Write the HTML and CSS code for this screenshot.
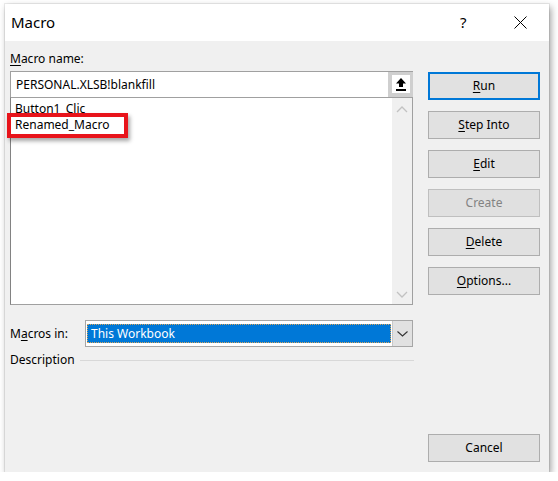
FILE: index.html
```html
<!DOCTYPE html>
<html>
<head>
<meta charset="utf-8">
<link rel="stylesheet" href="styles.css">
</head>
<body>
<div class="dialog">
  <div class="titlebar">
    <span class="title">Macro</span>
    <span class="tb-help">?</span>
    <span class="tb-close"><svg width="13" height="13" viewBox="0 0 13 13"><path d="M0.5 0.5 L12.5 12.5 M12.5 0.5 L0.5 12.5" stroke="#000" stroke-width="1" fill="none"/></svg></span>
  </div>
  <div class="body">
    <div class="left">
      <div class="lbl name-lbl"><u>M</u>acro name:</div>
      <div class="namebox">
        <span class="nametext">PERSONAL.XLSB!blankfill</span>
        <span class="upbtn"><span class="upicon"><svg width="12" height="14" viewBox="0 0 12 14"><path d="M6 1 L11 6.5 L8 6.5 L8 10 L4 10 L4 6.5 L1 6.5 Z" fill="#000"/><rect x="1" y="12" width="10" height="2" fill="#000"/></svg></span></span>
      </div>
      <div class="listbox">
        <div class="items">
          <div class="item">Button1_Clic</div>
          <div class="item marked">Renamed_Macro<span class="redbox"></span></div>
        </div>
        <div class="scroll">
          <svg width="12" height="7" viewBox="0 0 12 7"><path d="M1 6 L6 1 L11 6" stroke="#c2c2c2" stroke-width="1.3" fill="none"/></svg>
          <svg width="12" height="7" viewBox="0 0 12 7"><path d="M1 1 L6 6 L11 1" stroke="#c2c2c2" stroke-width="1.3" fill="none"/></svg>
        </div>
      </div>
      <div class="inrow">
        <div class="lbl">M<u>a</u>cros in:</div>
        <div class="combo">
          <div class="selwrap"><div class="sel">This Workbook</div></div>
          <div class="ddbtn"><svg width="11" height="6" viewBox="0 0 11 6"><path d="M0.5 0.5 L5.5 5 L10.5 0.5" stroke="#333" stroke-width="1.1" fill="none"/></svg></div>
        </div>
      </div>
      <div class="desc"><span class="lbl">Description</span><span class="rule"></span></div>
    </div>
    <div class="right">
      <div class="btn default"><u>R</u>un</div>
      <div class="btn"><u>S</u>tep Into</div>
      <div class="btn"><u>E</u>dit</div>
      <div class="btn disabled">Create</div>
      <div class="btn"><u>D</u>elete</div>
      <div class="btn"><u>O</u>ptions...</div>
      <div class="btn cancel">Cancel</div>
    </div>
  </div>
</div>
</body>
</html>
```

FILE: styles.css
```css
* { box-sizing: border-box; }
html, body { margin: 0; padding: 0; background: #ffffff; }
body {
  font-family: "Noto Sans", "Open Sans", "Liberation Sans", sans-serif;
  font-size: 12px;
  color: #000;
  padding: 4px 0 0 5px;
}
u { text-decoration: underline; text-underline-offset: 2px; }
.dialog {
  width: 544px;
  height: 468px;
  background: #f0f0f0;
  display: flex;
  flex-direction: column;
  box-shadow: 0 0 0 1px rgba(0,0,0,0.07), 2px 3px 7px rgba(0,0,0,0.38);
}
.titlebar {
  height: 37px;
  background: #ffffff;
  display: flex;
  align-items: center;
  padding-left: 6px;
}
.title { font-size: 15px; flex: 1; padding-bottom: 1px; }
.tb-help { font-size: 15px; width: 14px; margin-right: 40px; padding-bottom: 2px; }
.tb-close { width: 13px; height: 13px; margin-right: 22px; display: flex; }
.body {
  flex: 1;
  display: flex;
  padding: 0 9px 10px 5px;
}
.left {
  width: 403px;
  display: flex;
  flex-direction: column;
}
.lbl { line-height: 16px; white-space: nowrap; }
.name-lbl { margin-top: 10px; margin-bottom: 4px; }
.namebox {
  height: 26px;
  border: 1px solid #a0a0a0;
  border-bottom: none;
  background: #fff;
  display: flex;
  align-items: center;
}
.nametext { flex: 1; padding-left: 5px; }
.upbtn {
  width: 25px;
  height: 25px;
  background: #cfcfcf;
  display: flex;
  align-items: center;
  justify-content: center;
  margin-right: -1px;
  margin-top: -1px;
}
.upicon {
  width: 18px;
  height: 18px;
  background: #fff;
  display: flex;
  align-items: center;
  justify-content: center;
}
.listbox {
  height: 208px;
  border: 1px solid #a0a0a0;
  border-left-color: #828282;
  background: #fff;
  display: flex;
}
.items { flex: 1; padding: 3px 0 0 4px; }
.item { line-height: 16px; position: relative; }
.redbox {
  position: absolute;
  left: -8px;
  top: -4px;
  width: 121px;
  height: 25px;
  border: 4px solid #e8141b;
  box-shadow: 2px 3px 4px rgba(0,0,0,0.35);
}
.scroll {
  width: 20px;
  background: #f0f0f0;
  display: flex;
  flex-direction: column;
  justify-content: space-between;
  align-items: center;
  padding: 8px 0 6px;
}
.inrow {
  margin-top: 15px;
  display: flex;
  align-items: center;
}
.inrow .lbl { width: 75px; }
.combo {
  flex: 1;
  height: 27px;
  border: 1px solid #a6a6a6;
  background: #fff;
  display: flex;
}
.selwrap { flex: 1; padding: 3px 1px 3px 1px; }
.sel {
  height: 100%;
  background: #0078d7;
  color: #fff;
  border: 1px dotted #d9a45a;
  padding-left: 3px;
  line-height: 17px;
}
.ddbtn {
  width: 20px;
  background: #e1e1e1;
  border-left: 1px solid #c8c8c8;
  display: flex;
  align-items: center;
  justify-content: center;
}
.desc {
  margin-top: 5px;
  display: flex;
  align-items: center;
}
.rule {
  flex: 1;
  height: 1px;
  background: #d8d8d8;
  margin-left: 5px;
  margin-right: -1px;
}
.right {
  width: 112px;
  margin-left: 15px;
  padding-top: 31px;
  display: flex;
  flex-direction: column;
  gap: 11px;
}
.btn {
  height: 28px;
  background: #e1e1e1;
  border: 1px solid #adadad;
  display: flex;
  align-items: center;
  justify-content: center;
  padding-bottom: 1px;
}
.btn.default { border: 2px solid #0078d7; }
.btn.disabled { color: #838383; border-color: #bfbfbf; background: #e0e0e0; }
.btn.cancel { margin-top: auto; }
```
